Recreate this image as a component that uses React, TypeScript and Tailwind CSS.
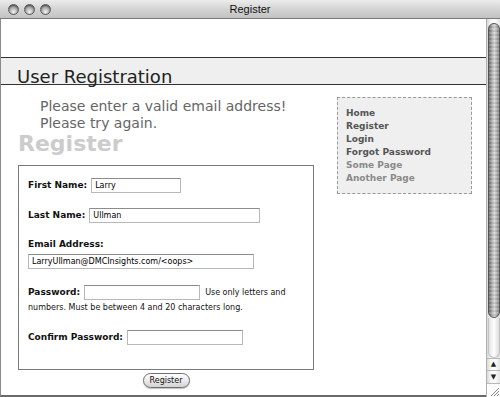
import React from 'react';

const sideLinks = [
  { label: 'Home', muted: false },
  { label: 'Register', muted: false },
  { label: 'Login', muted: false },
  { label: 'Forgot Password', muted: false },
  { label: 'Some Page', muted: true },
  { label: 'Another Page', muted: true },
];

const inputCls =
  "h-[15px] bg-white border border-[#b8b8b8] border-t-[#8c8c8c] px-[3px] text-[8px] text-black outline-none font-['DejaVu_Sans',sans-serif]";

const TrafficLight: React.FC = () => (
  <span className="block w-[11px] h-[11px] rounded-full border border-[#5a5a5a] bg-[radial-gradient(circle_at_50%_75%,#f4f4f4_0%,#b4b4b4_45%,#6a6a6a_100%)] shadow-[inset_0_1px_1px_rgba(0,0,0,0.4)]" />
);

const App: React.FC = () => {
  return (
    <div className="w-[500px] h-[397px] bg-white overflow-hidden flex flex-col font-['DejaVu_Sans',sans-serif]">
      {/* Title bar */}
      <div className="relative h-[19px] shrink-0 flex items-center border-b border-[#7a7a7a] bg-gradient-to-b from-[#ececec] via-[#d4d4d4] to-[#c2c2c2]">
        <div className="flex gap-[5px] pl-[8px]">
          <TrafficLight />
          <TrafficLight />
          <TrafficLight />
        </div>
        <div className="absolute inset-0 flex items-center justify-center pl-[-2px] text-[11px] text-[#111] font-['Liberation_Sans',sans-serif]">
          Register
        </div>
      </div>

      <div className="flex flex-1 min-h-0">
        {/* Page content */}
        <div className="flex-1 flex flex-col border-l border-[#8a8a8a] border-b-2 border-b-[#6a6a6a]">
          <div className="h-[38px] shrink-0" />
          <div className="h-[28px] shrink-0 bg-[#efefef] border-y border-[#333] pl-[16px] pt-[10px]">
            <h1 className="text-[18px] leading-[18px] text-[#222] whitespace-nowrap">User Registration</h1>
          </div>

          <div className="flex">
            <div className="w-[320px] shrink-0">
              <p className="mt-[13px] ml-[39px] text-[14px] leading-[17px] text-[#666]">
                Please enter a valid email address!
                <br />
                Please try again.
              </p>
              <h2 className="ml-[17px] text-[22px] leading-[24px] font-bold text-[#cccccc]">Register</h2>

              <form className="ml-[17px] mt-[9px] w-[296px] h-[205px] border border-[#7a7a7a] pl-[9px] text-[9px] text-[#111]">
                <div className="mt-[12px] flex items-center gap-[4px]">
                  <label className="font-bold">First Name:</label>
                  <input className={`${inputCls} w-[90px]`} defaultValue="Larry" />
                </div>
                <div className="mt-[15px] flex items-center gap-[4px]">
                  <label className="font-bold">Last Name:</label>
                  <input className={`${inputCls} w-[171px]`} defaultValue="Ullman" />
                </div>
                <div className="mt-[15px] h-[12px] leading-[12px] font-bold">Email Address:</div>
                <div className="mt-[4px]">
                  <input className={`${inputCls} w-[226px]`} defaultValue="LarryUllman@DMCInsights.com/<oops>" />
                </div>
                <div className="mt-[16px] flex items-center gap-[4px]">
                  <label className="font-bold">Password:</label>
                  <input type="password" className={`${inputCls} w-[116px]`} />
                  <span className="text-[8px] ml-[1px]">Use only letters and</span>
                </div>
                <div className="mt-[3px] h-[10px] leading-[10px] text-[8px]">
                  numbers. Must be between 4 and 20 characters long.
                </div>
                <div className="mt-[17px] flex items-center gap-[4px]">
                  <label className="font-bold">Confirm Password:</label>
                  <input type="password" className={`${inputCls} w-[116px]`} />
                </div>
              </form>

              <div className="ml-[17px] w-[296px] mt-[3px] flex justify-center">
                <button
                  type="button"
                  className="h-[15px] w-[47px] rounded-full border border-[#6e6e6e] bg-gradient-to-b from-[#ffffff] via-[#ececec] to-[#d2d2d2] text-[8px] leading-[13px] text-[#111] shadow-[0_1px_1px_rgba(0,0,0,0.25)]"
                >
                  Register
                </button>
              </div>
            </div>

            {/* Sidebar menu */}
            <div className="ml-[16px] mt-[12px] w-[135px] h-[97px] border border-dashed border-[#9a9a9a] bg-[#efefef] pl-[8px] pt-[9px]">
              {sideLinks.map((item, index) => (
                <a
                  key={index}
                  href="#"
                  className={`block text-[9px] leading-[13px] font-bold ${item.muted ? 'text-[#8a8a8a]' : 'text-[#555]'}`}
                >
                  {item.label}
                </a>
              ))}
            </div>
          </div>
        </div>

        {/* Scrollbar */}
        <div className="w-[14px] shrink-0 flex flex-col bg-[linear-gradient(to_right,#d8d8d8,#f7f7f7_30%,#ffffff_60%,#e2e2e2)] border-l border-[#b0b0b0]">
          <div className="h-[4px] shrink-0" />
          <div className="mx-auto w-[12px] h-[295px] shrink-0 rounded-full border border-[#555] bg-[repeating-linear-gradient(to_bottom,rgba(255,255,255,0.15)_0px,rgba(255,255,255,0.15)_2px,rgba(0,0,0,0.06)_2px,rgba(0,0,0,0.06)_4px),linear-gradient(to_right,#6c6c6c,#b8b8b8_35%,#d4d4d4_55%,#8a8a8a)]" />
          <div className="mx-auto w-[12px] h-[40px] shrink-0 rounded-b-full border border-t-0 border-[#c2c2c2] bg-[linear-gradient(to_right,#e4e4e4,#ffffff_50%,#dcdcdc)]" />
          <div className="h-[12px] shrink-0 flex items-center justify-center border-t border-[#b8b8b8] text-[7px] leading-none text-[#222]">
            ▲
          </div>
          <div className="h-[13px] shrink-0 flex items-center justify-center border-t border-[#b8b8b8] text-[7px] leading-none text-[#222]">
            ▼
          </div>
          <div className="flex-1 flex items-end justify-end border-t border-[#b8b8b8] bg-white">
            <svg width="12" height="12" viewBox="0 0 12 12">
              <path d="M11 3L3 11M11 6L6 11M11 9L9 11" stroke="#888" strokeWidth="1" />
            </svg>
          </div>
        </div>
      </div>
    </div>
  );
};

export default App;
